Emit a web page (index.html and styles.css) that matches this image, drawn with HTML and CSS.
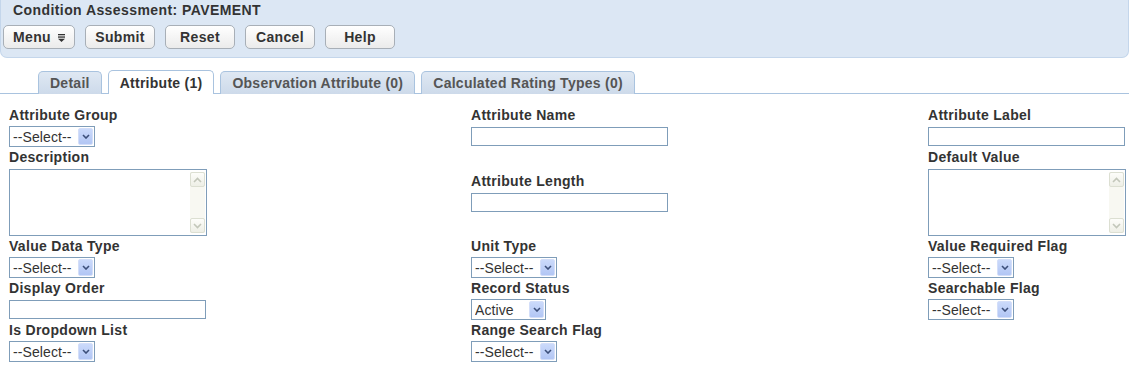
FILE: index.html
```html
<!DOCTYPE html>
<html>
<head>
<meta charset="utf-8">
<link rel="stylesheet" href="styles.css">
</head>
<body>
<div class="header">
  <div class="title">Condition Assessment: PAVEMENT</div>
  <div class="toolbar">
    <button class="btn btn-menu">Menu <svg class="menu-ic" width="7" height="8" viewBox="0 0 7 8"><rect x="0" y="0" width="7" height="1.3" fill="#333"/><rect x="0" y="2.4" width="7" height="1.3" fill="#333"/><polygon points="0,4.8 7,4.8 3.5,8" fill="#333"/></svg></button>
    <button class="btn">Submit</button>
    <button class="btn">Reset</button>
    <button class="btn">Cancel</button>
    <button class="btn">Help</button>
  </div>
</div>

<div class="tabs">
  <div class="tab">Detail</div>
  <div class="tab active">Attribute (1)</div>
  <div class="tab">Observation Attribute (0)</div>
  <div class="tab">Calculated Rating Types (0)</div>
</div>

<form class="form">
  <!-- row 1 -->
  <div class="cell">
    <label class="lbl">Attribute Group</label>
    <span class="sel"><select><option>--Select--</option></select><span class="arrow"><svg width="8" height="5" viewBox="0 0 8 5"><polyline points="1,1 4,4 7,1" fill="none" stroke="#3c4f7a" stroke-width="1.6"/></svg></span></span>
  </div>
  <div class="cell">
    <label class="lbl">Attribute Name</label>
    <input class="txt" type="text">
  </div>
  <div class="cell">
    <label class="lbl">Attribute Label</label>
    <input class="txt" type="text">
  </div>

  <!-- row 2 -->
  <div class="cell">
    <label class="lbl">Description</label>
    <div class="ta">
      <textarea></textarea>
      <div class="sb">
        <span class="sb-btn"><svg width="9" height="6" viewBox="0 0 9 6"><polyline points="1,5 4.5,1.5 8,5" fill="none" stroke="#c3c7ba" stroke-width="1.6"/></svg></span>
        <span class="sb-btn"><svg width="9" height="6" viewBox="0 0 9 6"><polyline points="1,1 4.5,4.5 8,1" fill="none" stroke="#c3c7ba" stroke-width="1.6"/></svg></span>
      </div>
    </div>
  </div>
  <div class="cell mid">
    <label class="lbl">Attribute Length</label>
    <input class="txt" type="text">
  </div>
  <div class="cell">
    <label class="lbl">Default Value</label>
    <div class="ta">
      <textarea></textarea>
      <div class="sb">
        <span class="sb-btn"><svg width="9" height="6" viewBox="0 0 9 6"><polyline points="1,5 4.5,1.5 8,5" fill="none" stroke="#c3c7ba" stroke-width="1.6"/></svg></span>
        <span class="sb-btn"><svg width="9" height="6" viewBox="0 0 9 6"><polyline points="1,1 4.5,4.5 8,1" fill="none" stroke="#c3c7ba" stroke-width="1.6"/></svg></span>
      </div>
    </div>
  </div>

  <!-- row 3 -->
  <div class="cell">
    <label class="lbl">Value Data Type</label>
    <span class="sel"><select><option>--Select--</option></select><span class="arrow"><svg width="8" height="5" viewBox="0 0 8 5"><polyline points="1,1 4,4 7,1" fill="none" stroke="#3c4f7a" stroke-width="1.6"/></svg></span></span>
  </div>
  <div class="cell">
    <label class="lbl">Unit Type</label>
    <span class="sel"><select><option>--Select--</option></select><span class="arrow"><svg width="8" height="5" viewBox="0 0 8 5"><polyline points="1,1 4,4 7,1" fill="none" stroke="#3c4f7a" stroke-width="1.6"/></svg></span></span>
  </div>
  <div class="cell">
    <label class="lbl">Value Required Flag</label>
    <span class="sel"><select><option>--Select--</option></select><span class="arrow"><svg width="8" height="5" viewBox="0 0 8 5"><polyline points="1,1 4,4 7,1" fill="none" stroke="#3c4f7a" stroke-width="1.6"/></svg></span></span>
  </div>

  <!-- row 4 -->
  <div class="cell">
    <label class="lbl">Display Order</label>
    <input class="txt" type="text">
  </div>
  <div class="cell">
    <label class="lbl">Record Status</label>
    <span class="sel sel-sm"><select><option>Active</option></select><span class="arrow"><svg width="8" height="5" viewBox="0 0 8 5"><polyline points="1,1 4,4 7,1" fill="none" stroke="#3c4f7a" stroke-width="1.6"/></svg></span></span>
  </div>
  <div class="cell">
    <label class="lbl">Searchable Flag</label>
    <span class="sel"><select><option>--Select--</option></select><span class="arrow"><svg width="8" height="5" viewBox="0 0 8 5"><polyline points="1,1 4,4 7,1" fill="none" stroke="#3c4f7a" stroke-width="1.6"/></svg></span></span>
  </div>

  <!-- row 5 -->
  <div class="cell">
    <label class="lbl">Is Dropdown List</label>
    <span class="sel"><select><option>--Select--</option></select><span class="arrow"><svg width="8" height="5" viewBox="0 0 8 5"><polyline points="1,1 4,4 7,1" fill="none" stroke="#3c4f7a" stroke-width="1.6"/></svg></span></span>
  </div>
  <div class="cell">
    <label class="lbl">Range Search Flag</label>
    <span class="sel"><select><option>--Select--</option></select><span class="arrow"><svg width="8" height="5" viewBox="0 0 8 5"><polyline points="1,1 4,4 7,1" fill="none" stroke="#3c4f7a" stroke-width="1.6"/></svg></span></span>
  </div>
  <div class="cell"></div>
</form>
</body>
</html>
```

FILE: styles.css
```css
* { box-sizing: border-box; }

body {
  margin: 0;
  background: #ffffff;
  font-family: "Liberation Sans", Arial, sans-serif;
  color: #333333;
}

.header {
  background: #dce7f4;
  border: 1px solid #c4d6eb;
  border-top: none;
  border-radius: 0 0 7px 7px;
  height: 58px;
  padding: 2px 0 0 0;
}

.title {
  font-size: 14px;
  font-weight: bold;
  line-height: 17px;
  padding-left: 12px;
  letter-spacing: 0.42px;
  color: #333333;
}

.toolbar {
  display: flex;
  gap: 10px;
  margin-top: 6px;
  padding-left: 2px;
}

.btn {
  display: flex;
  align-items: center;
  justify-content: center;
  gap: 7px;
  width: 70px;
  height: 24px;
  padding: 0;
  border: 1px solid #a8afb7;
  border-radius: 5px;
  background: linear-gradient(#ffffff, #ebebeb);
  font-family: "Liberation Sans", Arial, sans-serif;
  font-size: 14px;
  font-weight: bold;
  letter-spacing: 0.35px;
  color: #333333;
}

.btn-menu { width: 72px; }

.menu-ic { display: block; margin-top: 1px; }

.tabs {
  display: flex;
  gap: 6px;
  margin-top: 12px;
  padding-left: 38px;
  border-bottom: 1px solid #a9c3df;
  height: 24px;
}

.tab {
  height: 23px;
  margin-top: 1px;
  padding: 0 11px;
  line-height: 22px;
  font-size: 14px;
  font-weight: bold;
  letter-spacing: 0.26px;
  color: #555555;
  background: linear-gradient(#dfe8f3, #cddaea);
  border: 1px solid #a9c3df;
  border-bottom: none;
  border-radius: 5px 5px 0 0;
}

.tab.active {
  background: #ffffff;
  color: #333333;
  height: 24px;
  margin-top: 0;
  line-height: 24px;
}

.form {
  display: grid;
  grid-template-columns: 462px 457px 1fr;
  padding: 13px 0 0 9px;
}

.cell {
  display: flex;
  flex-direction: column;
  align-items: flex-start;
  padding-bottom: 2px;
}

.cell.mid { justify-content: center; }

.lbl {
  display: block;
  font-size: 14px;
  font-weight: bold;
  line-height: 17px;
  letter-spacing: 0.3px;
  color: #333333;
  margin-bottom: 2px;
}

.txt {
  width: 197px;
  height: 19px;
  margin: 1px 0;
  border: 1px solid #7f9db9;
  background: #ffffff;
  padding: 0 3px;
  font-family: "Liberation Sans", Arial, sans-serif;
  font-size: 14px;
}

.sel {
  position: relative;
  display: block;
  width: 86px;
  height: 21px;
}

.sel-sm { width: 75px; }

.sel select {
  appearance: none;
  -webkit-appearance: none;
  width: 100%;
  height: 100%;
  border: 1px solid #7f9db9;
  border-radius: 0;
  background: #ffffff;
  padding: 0 0 0 3px;
  margin: 0;
  font-family: "Liberation Sans", Arial, sans-serif;
  font-size: 14px;
  letter-spacing: 0.1px;
  color: #333333;
  outline: none;
}

.arrow {
  position: absolute;
  top: 2px;
  right: 2px;
  width: 15px;
  height: 17px;
  display: flex;
  align-items: center;
  justify-content: center;
  background: linear-gradient(#cbdafb, #b2c6f4);
  border: 1px solid #d3def9;
  border-radius: 2px;
}

.arrow svg { display: block; }

.ta {
  display: flex;
  width: 198px;
  height: 67px;
  margin-top: 1px;
  border: 1px solid #7f9db9;
  background: #ffffff;
}

.ta textarea {
  flex: 1;
  border: none;
  resize: none;
  outline: none;
  margin: 0;
  padding: 2px;
  font-family: "Liberation Sans", Arial, sans-serif;
  font-size: 14px;
}

.sb {
  width: 15px;
  margin: 2px 1px 2px 0;
  display: flex;
  flex-direction: column;
  justify-content: space-between;
  background: #f8f8f2;
}

.sb-btn {
  width: 15px;
  height: 15px;
  display: flex;
  align-items: center;
  justify-content: center;
  border: 1px solid #dcdfd2;
  border-radius: 2px;
  background: linear-gradient(#fdfdfa, #eeefe6);
}

.sb-btn svg { display: block; }
```
